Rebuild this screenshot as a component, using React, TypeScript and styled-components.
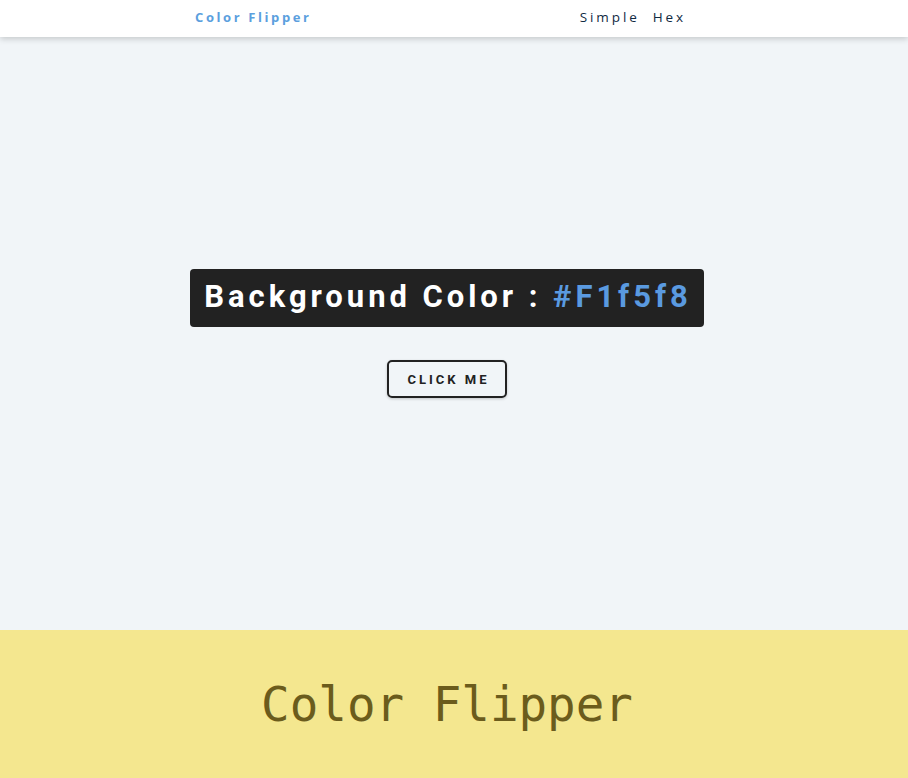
import React from "react";
import styled, { createGlobalStyle } from "styled-components";

const Global = createGlobalStyle`
  html, body { margin: 0; padding: 0; }
  body { background: #f1f5f8; font-family: Roboto, "Open Sans", sans-serif; overflow: hidden; }
  * { box-sizing: border-box; }
`;

const Nav = styled.nav`
  height: 37px;
  background: #fff;
  box-shadow: 0 2px 6px rgba(0, 0, 0, 0.18);
  position: relative;
  z-index: 1;
`;

const NavInner = styled.div`
  height: 100%;
  display: flex;
  align-items: center;
  justify-content: space-between;
  padding: 0 222px 4px 195px;
`;

const Brand = styled.span`
  font-family: "Open Sans", sans-serif;
  font-weight: 700;
  font-size: 13px;
  letter-spacing: 2.6px;
  color: #5c9fde;
`;

const NavLinks = styled.div`
  display: flex;
  gap: 13px;
`;

const NavLink = styled.span`
  font-family: "Open Sans", sans-serif;
  font-size: 13.5px;
  letter-spacing: 2.9px;
  color: #102a42;
`;

const Main = styled.main`
  height: 593px;
  display: flex;
  flex-direction: column;
  align-items: center;
  justify-content: center;
  gap: 33px;
  padding-right: 14px;
`;

const Title = styled.h2`
  margin: 0;
  background: #222;
  color: #fff;
  border-radius: 4px;
  padding: 10px 12px 12px 14px;
  font-family: Roboto, sans-serif;
  font-weight: 700;
  font-size: 31px;
  line-height: 36px;
  letter-spacing: 3.95px;
`;

const Hex = styled.span`
  color: #5a9ae0;
`;

const Button = styled.button`
  background: transparent;
  border: 2px solid #222;
  border-radius: 5px;
  height: 38px;
  width: 120px;
  font-family: Roboto, sans-serif;
  font-weight: 700;
  font-size: 13px;
  letter-spacing: 3px;
  color: #222;
  padding: 0 0 0 3px;
  cursor: pointer;
  box-shadow: 0 1px 3px rgba(0, 0, 0, 0.2);
`;

const Footer = styled.footer`
  height: 148px;
  background: #f4e78f;
  display: flex;
  align-items: center;
  justify-content: center;
  padding-right: 14px;
`;

const FooterTitle = styled.h1`
  margin: 0;
  font-family: "DejaVu Sans Mono", monospace;
  font-weight: 400;
  font-size: 47.5px;
  color: #6b5c1c;
`;

export default function App() {
  return (
    <>
      <Global />
      <Nav>
        <NavInner>
          <Brand>Color Flipper</Brand>
          <NavLinks>
            <NavLink>Simple</NavLink>
            <NavLink>Hex</NavLink>
          </NavLinks>
        </NavInner>
      </Nav>
      <Main>
        <Title>
          Background Color : <Hex>#F1f5f8</Hex>
        </Title>
        <Button>CLICK ME</Button>
      </Main>
      <Footer>
        <FooterTitle>Color Flipper</FooterTitle>
      </Footer>
    </>
  );
}
